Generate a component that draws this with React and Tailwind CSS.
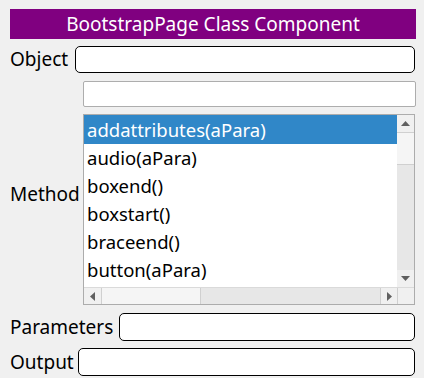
import React from "react";

const items = [
  "addattributes(aPara)",
  "audio(aPara)",
  "boxend()",
  "boxstart()",
  "braceend()",
  "button(aPara)",
];

function Tri({ dir }) {
  const pts = {
    up: "0,5 4.5,0 9,5",
    down: "0,0 4.5,5 9,0",
    left: "5,0 0,4.5 5,9",
    right: "0,0 5,4.5 0,9",
  }[dir];
  const vert = dir === "up" || dir === "down";
  return (
    <svg width={vert ? 9 : 5} height={vert ? 5 : 9} viewBox={vert ? "0 0 9 5" : "0 0 5 9"}>
      <polygon points={pts} fill="#606060" />
    </svg>
  );
}

export default function App() {
  return (
    <div
      className="w-[424px] h-[378px] bg-[#f0f0f0] text-black overflow-hidden"
      style={{ fontFamily: '"Noto Sans", "Open Sans", sans-serif' }}
    >
      <div className="pt-[9px] pl-[10px] pr-[8px] flex flex-col">
        <div className="h-[30px] bg-[#800080] text-white text-[19px] flex items-center justify-center">
          BootstrapPage Class Component
        </div>
        <div className="mt-[7px] flex items-center h-[27px]">
          <span className="text-[19px] w-[65px]">Object</span>
          <div className="flex-1 h-full bg-white border border-black rounded-[5px] mr-[1px]" />
        </div>
        <div className="mt-[8px] flex h-[26px]">
          <div className="ml-[73px] flex-1 bg-white border border-[#adadad] rounded-[2px]" />
        </div>
        <div className="mt-[7px] flex h-[191px]">
          <span className="text-[19px] w-[73px] mt-[66px] leading-[28px]">Method</span>
          <div className="flex-1 h-full mr-[1px] border border-[#acacac] bg-white flex flex-col">
            <div className="flex flex-1 min-h-0">
              <div className="flex-1 flex flex-col text-[18.5px] overflow-hidden">
                {items.map((t, i) => (
                  <div
                    key={t}
                    className={
                      "pl-[3px] flex items-center whitespace-nowrap " +
                      (i === 0 ? "bg-[#3087c8] text-white h-[29px]" : "h-[28px]")
                    }
                  >
                    {t}
                  </div>
                ))}
              </div>
              <div className="w-[17px] bg-[#e7e7e7] flex flex-col">
                <div className="h-[17px] bg-[#f0f0f0] flex items-center justify-center">
                  <Tri dir="up" />
                </div>
                <div className="h-[33px] bg-[#f5f5f5] border-y border-[#d0d0d0]" />
                <div className="flex-1" />
                <div className="h-[17px] bg-[#f0f0f0] flex items-center justify-center">
                  <Tri dir="down" />
                </div>
              </div>
            </div>
            <div className="h-[17px] flex border-t border-[#dadada] bg-[#e7e7e7]">
              <div className="w-[17px] bg-[#f0f0f0] flex items-center justify-center">
                <Tri dir="left" />
              </div>
              <div className="w-[100px] bg-[#f5f5f5] border-x border-[#d0d0d0]" />
              <div className="flex-1" />
              <div className="w-[17px] bg-[#f0f0f0] border-l border-[#d0d0d0] flex items-center justify-center">
                <Tri dir="right" />
              </div>
              <div className="w-[17px] bg-[#f0f0f0] border-l border-[#d0d0d0]" />
            </div>
          </div>
        </div>
        <div className="mt-[8px] flex items-center h-[28px]">
          <span className="text-[19px] w-[109px]">Parameters</span>
          <div className="flex-1 h-full bg-white border border-black rounded-[5px] mr-[1px]" />
        </div>
        <div className="mt-[7px] flex items-center h-[28px]">
          <span className="text-[19px] w-[68px]">Output</span>
          <div className="flex-1 h-full bg-white border border-black rounded-[5px] mr-[1px]" />
        </div>
      </div>
    </div>
  );
}
